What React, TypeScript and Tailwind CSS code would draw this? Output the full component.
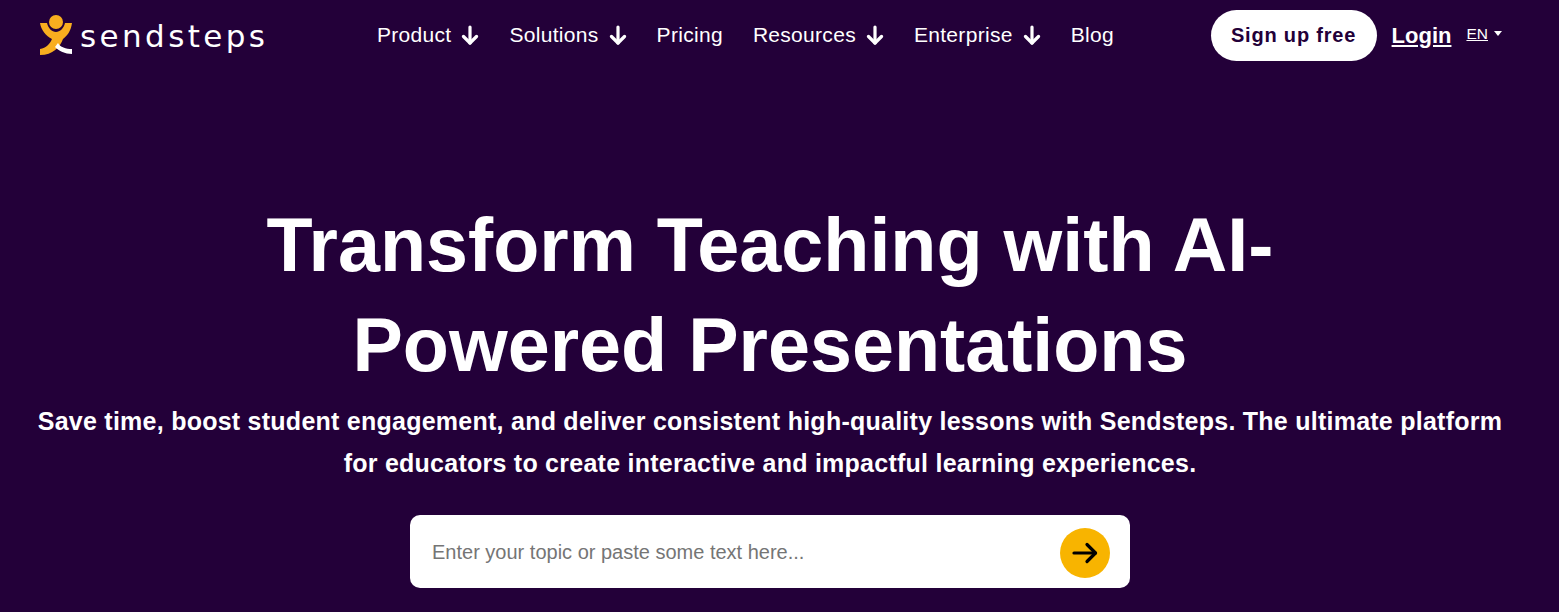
import React from "react";

function ArrowDown() {
  return (
    <svg width="18" height="20" viewBox="0 0 18 20" fill="none" stroke="currentColor" strokeWidth="3.2" strokeLinecap="round" strokeLinejoin="round" className="ml-[10px]">
      <path d="M9 2v16" />
      <path d="M2.5 11.5L9 18l6.5-6.5" />
    </svg>
  );
}

function Mark() {
  return (
    <svg width="34" height="42" viewBox="39 14 34 42" className="shrink-0">
      <circle cx="56" cy="22" r="7" fill="#f8ae1f" />
      <path d="M40 23L47 23C48 28 52 32 56 32C60 32 64 28 65 23L72 23C71 31 67 36 63 39C60 47 53 55 40 55L40 49C46 48 50 44 52 39C46 36 41 30 40 23Z" fill="#f8ae1f" />
      <path d="M58 43C60 47 66 49 72 49L72 54C65 54 59 51 55 47Z" fill="#ffffff" />
    </svg>
  );
}

function NavItem({ label, arrow }: { label: string; arrow?: boolean }) {
  return (
    <a className="flex items-center text-[21px] tracking-[0.3px] text-white">
      <span>{label}</span>
      {arrow && <ArrowDown />}
    </a>
  );
}

export default function App() {
  return (
    <div className="h-[612px] w-full overflow-hidden bg-[#230039] font-['Liberation_Sans',Arial,sans-serif] text-white">
      <header className="flex h-[70px] items-center pl-[39px] pr-[57px]">
        <div className="flex w-[338px] items-center">
          <Mark />
          <span className="ml-[7px] mt-[2px] font-['DejaVu_Sans',sans-serif] text-[31px] leading-none font-normal tracking-[3.4px] text-white">sendsteps</span>
        </div>
        <nav className="flex items-center gap-[30px]">
          <NavItem label="Product" arrow />
          <NavItem label="Solutions" arrow />
          <NavItem label="Pricing" />
          <NavItem label="Resources" arrow />
          <NavItem label="Enterprise" arrow />
          <NavItem label="Blog" />
        </nav>
        <div className="ml-auto flex items-center">
          <a className="flex h-[51px] w-[166px] items-center justify-center rounded-full bg-white text-[20px] font-bold tracking-[0.8px] text-[#230039]">Sign up free</a>
          <a className="ml-[15px] text-[22px] font-bold text-white underline">Login</a>
          <div className="mb-[3px] ml-[15px] flex items-center">
            <span className="text-[15.5px] text-white underline">EN</span>
            <span className="ml-[6px] h-0 w-0 border-x-[4px] border-t-[5px] border-x-transparent border-t-white" />
          </div>
        </div>
      </header>
      <main className="flex w-[1540px] flex-col items-center pt-[125px]">
        <h1 className="w-[1100px] text-center text-[75.5px] leading-[100px] font-bold">
          Transform Teaching with AI-
          <br />
          Powered Presentations
        </h1>
        <p className="mt-[5px] w-[1500px] text-center text-[25px] leading-[42px] font-bold tracking-[0.25px]">
          Save time, boost student engagement, and deliver consistent high-quality lessons with Sendsteps. The ultimate platform
          <br />
          for educators to create interactive and impactful learning experiences.
        </p>
        <div className="mt-[31px] flex h-[73px] w-[720px] items-center justify-between rounded-[10px] bg-white pl-[22px] pr-[20px]">
          <span className="text-[20px] text-[#757575]">Enter your topic or paste some text here...</span>
          <button className="mt-[2px] flex h-[50px] w-[50px] items-center justify-center rounded-full bg-[#f8b400] text-black">
            <svg width="26" height="26" viewBox="0 0 26 26" fill="none" stroke="currentColor" strokeWidth="3.2" strokeLinecap="round" strokeLinejoin="round">
              <path d="M2 13h21.5" />
              <path d="M15 4.5l8.5 8.5-8.5 8.5" />
            </svg>
          </button>
        </div>
      </main>
    </div>
  );
}
